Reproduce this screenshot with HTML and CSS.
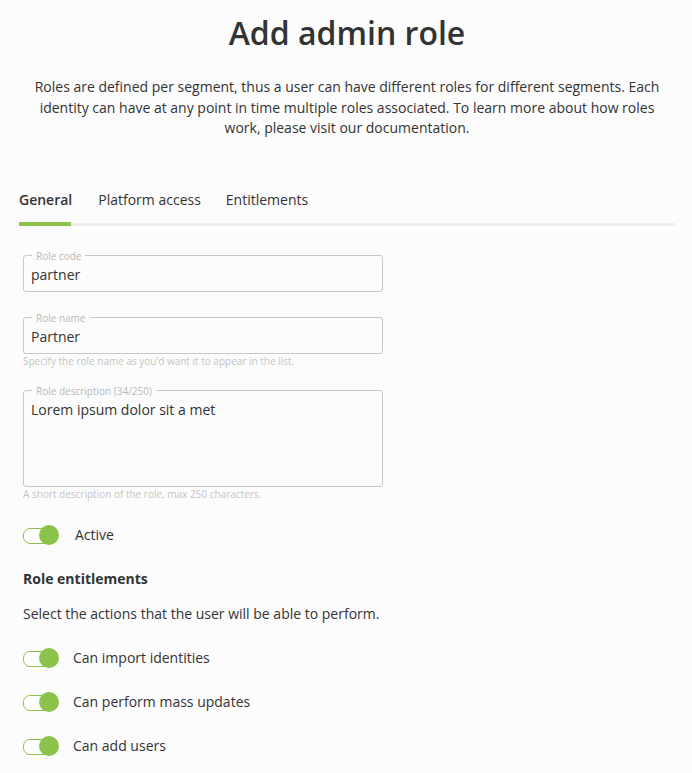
FILE: index.html
```html
<!DOCTYPE html>
<html lang="en">
<head>
<meta charset="utf-8">
<title>Add admin role</title>
<link rel="stylesheet" href="styles.css">
</head>
<body>
<main class="page">
  <h1 class="title">Add admin role</h1>
  <p class="intro">Roles are defined per segment, thus a user can have different roles for different segments. Each identity can have at any point in time multiple roles associated. To learn more about how roles work, please visit our documentation.</p>

  <nav class="tabs">
    <span class="tab tab-active">General</span>
    <span class="tab">Platform access</span>
    <span class="tab">Entitlements</span>
  </nav>

  <form class="form">
    <fieldset class="field field-code">
      <legend class="field-label">Role code</legend>
      <div class="field-value">partner</div>
    </fieldset>

    <fieldset class="field field-name">
      <legend class="field-label">Role name</legend>
      <div class="field-value">Partner</div>
    </fieldset>
    <div class="helper">Specify the role name as you’d want it to appear in the list.</div>

    <fieldset class="field field-desc">
      <legend class="field-label">Role description (34/250)</legend>
      <div class="field-value field-area">Lorem ipsum dolor sit a met</div>
    </fieldset>
    <div class="helper">A short description of the role, max 250 characters.</div>

    <div class="toggle-row toggle-active">
      <span class="toggle"><span class="knob"></span></span>
      <span class="toggle-label">Active</span>
    </div>

    <h2 class="section-title">Role entitlements</h2>
    <p class="section-text">Select the actions that the user will be able to perform.</p>

    <div class="toggle-row toggle-ent">
      <span class="toggle"><span class="knob"></span></span>
      <span class="toggle-label">Can import identities</span>
    </div>
    <div class="toggle-row toggle-ent">
      <span class="toggle"><span class="knob"></span></span>
      <span class="toggle-label">Can perform mass updates</span>
    </div>
    <div class="toggle-row toggle-ent">
      <span class="toggle"><span class="knob"></span></span>
      <span class="toggle-label">Can add users</span>
    </div>
  </form>
</main>
</body>
</html>
```

FILE: styles.css
```css
* { box-sizing: border-box; }

html, body {
  margin: 0;
  padding: 0;
  background: #fcfcfc;
}

body {
  font-family: "Open Sans", "Noto Sans", sans-serif;
  color: #333333;
  font-size: 14px;
}

.page {
  padding: 0 17px 0 19px;
}

.title {
  margin: 11px 0 0;
  font-size: 32px;
  line-height: 44px;
  font-weight: 600;
  text-align: center;
  color: #333;
}

.intro {
  margin: 22px 12px 0;
  font-size: 14px;
  line-height: 20.5px;
  text-align: center;
  color: #333;
}

.tabs {
  margin-top: 51px;
  display: flex;
  gap: 25px;
  border-bottom: 3px solid #eeeeee;
}

.tab {
  position: relative;
  font-size: 14px;
  line-height: 20px;
  padding-bottom: 13px;
  color: #333;
}

.tab-active {
  font-weight: 600;
  margin-right: 1px;
}

.tab-active::after {
  content: "";
  position: absolute;
  left: 0;
  right: 1px;
  bottom: -3px;
  height: 4px;
  background: #8bc34a;
}

.form {
  padding-left: 4px;
  display: flex;
  flex-direction: column;
  align-items: flex-start;
}

.field {
  width: 360px;
  margin: 0;
  border: 1px solid #c8c8c8;
  border-radius: 3px;
  padding: 3px 7px 6px 7px;
  min-width: 0;
}

.field-code { margin-top: 24px; }
.field-name { margin-top: 20px; }
.field-desc { margin-top: 18px; }

.field-label {
  margin-left: 1px;
  padding: 0 4px;
  font-size: 10px;
  line-height: 12px;
  color: #b8b8b8;
}

.field-value {
  font-size: 14px;
  line-height: 20px;
  color: #333;
}

.field-area {
  height: 80px;
}

.helper {
  margin-top: 1px;
  font-size: 10px;
  line-height: 12px;
  color: #c4c4c4;
}

.toggle-row {
  display: flex;
  align-items: center;
  height: 24px;
}

.toggle-active {
  margin-top: 23px;
  gap: 16px;
}

.toggle-ent {
  gap: 14px;
  margin-top: 20px;
}

.toggle {
  position: relative;
  width: 36px;
  height: 20px;
  flex: none;
}

.toggle::before {
  content: "";
  position: absolute;
  left: 0;
  top: 3px;
  width: 30px;
  height: 14px;
  border: 1px solid #8bc34a;
  border-radius: 7px;
  background: #ffffff;
}

.knob {
  position: absolute;
  right: 0;
  top: 0;
  width: 20px;
  height: 20px;
  border-radius: 50%;
  background: #8bc34a;
}

.toggle-label {
  font-size: 14px;
  line-height: 20px;
  color: #333;
}

.section-title {
  margin: 22px 0 0;
  font-size: 14px;
  line-height: 20px;
  font-weight: 700;
  color: #333;
}

.section-text {
  margin: 15px 0 0;
  font-size: 14px;
  line-height: 20px;
  color: #333;
}

.section-text + .toggle-ent {
  margin-top: 22px;
}
```
